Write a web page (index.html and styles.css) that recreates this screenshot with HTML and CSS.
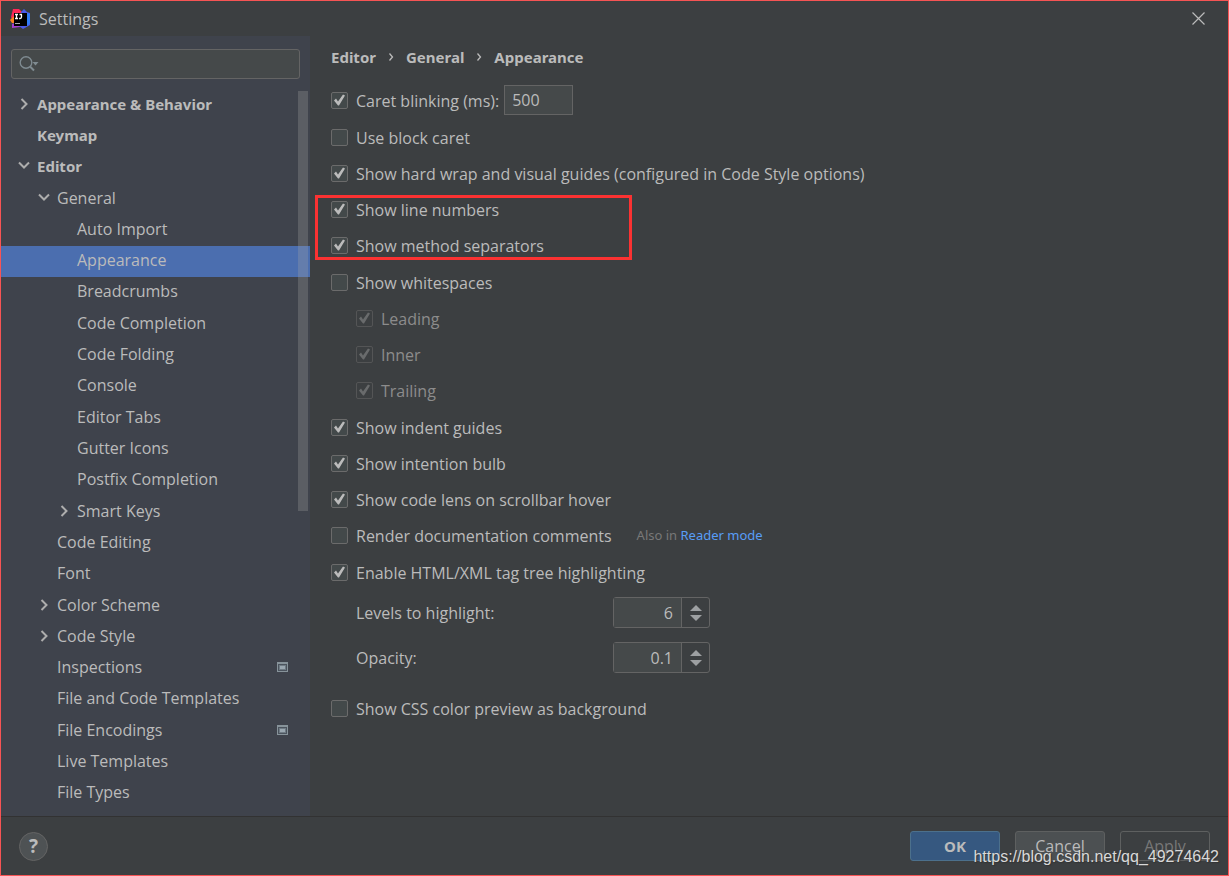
FILE: index.html
```html
<!DOCTYPE html>
<html lang="en">
<head>
<meta charset="utf-8">
<title>Settings</title>
<link rel="stylesheet" href="styles.css">
</head>
<body>
<div class="window">
  <header class="titlebar">
    <svg class="logo" width="20" height="20" viewBox="0 0 20 20" aria-hidden="true">
      <path d="M3 0 9 0l3 3-2 9H3L1 8z" fill="#fe2857"/>
      <path d="M0 11 4 7l1 7-3 0z" fill="#fc801d"/>
      <path d="M2 15l6-2 4 3-2 2-8 1z" fill="#a63fd0"/>
      <path d="M11 3l3-3 3 3 3 1v12l-7 4-4-3z" fill="#4a5bea"/>
      <path d="M17 4l3 1v9l-3 3z" fill="#2f7df6"/>
      <path fill="#000" d="M4 4h13v13H4z"/>
      <path d="M5 5.500h3M6.500 5.500v4M5 9.500h3M9.500 5.500h2.500M11.500 5.500v2.600q0 1.400-1.400 1.400h-1" fill="none" stroke="#fff" stroke-width="1.300"/>
      <path d="M5 14.500h5" stroke="#aaa" stroke-width="1"/>
    </svg>
    <h1 class="title">Settings</h1>
    <button class="close" type="button" aria-label="Close">
      <svg width="13" height="13" viewBox="0 0 13 13"><path d="M.5.5l12 12M12.500.5l-12 12" stroke="#bbb" stroke-width="1.200"/></svg>
    </button>
  </header>

  <div class="main">
    <nav class="sidebar" aria-label="Settings categories">
      <div class="search">
        <svg width="22" height="18" viewBox="0 0 22 18" aria-hidden="true"><circle cx="7" cy="7.500" r="5.800" fill="none" stroke="#7f8b91" stroke-width="1.400"/><path d="M11 11.500l4 4" stroke="#7f8b91" stroke-width="2"/><path d="M13.500 7h6l-3 3.500z" fill="#7f8b91"/></svg>
        <input class="search-input" type="text" aria-label="Search settings">
      </div>
      <div class="tree-area">
      <ul class="tree">
        <li class="node top"><svg class="arrow" viewBox="0 0 12 12"><path d="M3.500 1l5 5-5 5"/></svg><a href="#">Appearance &amp; Behavior</a></li>
        <li class="node top"><span class="arrow"></span><a href="#">Keymap</a></li>
        <li class="node top"><svg class="arrow" viewBox="0 0 12 12"><path d="M1 2.500l5 5 5-5"/></svg><a href="#">Editor</a></li>
        <li class="node second"><svg class="arrow" viewBox="0 0 12 12"><path d="M1 2.500l5 5 5-5"/></svg><a href="#">General</a></li>
        <li class="node third"><span class="arrow"></span><a href="#">Auto Import</a></li>
        <li class="node third selected"><span class="arrow"></span><a href="#" aria-current="page">Appearance</a></li>
        <li class="node third"><span class="arrow"></span><a href="#">Breadcrumbs</a></li>
        <li class="node third"><span class="arrow"></span><a href="#">Code Completion</a></li>
        <li class="node third"><span class="arrow"></span><a href="#">Code Folding</a></li>
        <li class="node third"><span class="arrow"></span><a href="#">Console</a></li>
        <li class="node third"><span class="arrow"></span><a href="#">Editor Tabs</a></li>
        <li class="node third"><span class="arrow"></span><a href="#">Gutter Icons</a></li>
        <li class="node third"><span class="arrow"></span><a href="#">Postfix Completion</a></li>
        <li class="node third"><svg class="arrow" viewBox="0 0 12 12"><path d="M3.500 1l5 5-5 5"/></svg><a href="#">Smart Keys</a></li>
        <li class="node second"><span class="arrow"></span><a href="#">Code Editing</a></li>
        <li class="node second"><span class="arrow"></span><a href="#">Font</a></li>
        <li class="node second"><svg class="arrow" viewBox="0 0 12 12"><path d="M3.500 1l5 5-5 5"/></svg><a href="#">Color Scheme</a></li>
        <li class="node second"><svg class="arrow" viewBox="0 0 12 12"><path d="M3.500 1l5 5-5 5"/></svg><a href="#">Code Style</a></li>
        <li class="node second"><span class="arrow"></span><a href="#">Inspections</a><svg class="project" width="11" height="10" viewBox="0 0 11 10"><path fill="#87939a" d="M0 0h11v10H0z"/><path fill="#4b535d" d="M1 2h9v7H1z"/><path fill="#6f7b84" d="M2 3h7v5H2z"/><path fill="#9aa7b0" d="M3 4h5v3H3z"/></svg></li>
        <li class="node second"><span class="arrow"></span><a href="#">File and Code Templates</a></li>
        <li class="node second"><span class="arrow"></span><a href="#">File Encodings</a><svg class="project" width="11" height="10" viewBox="0 0 11 10"><path fill="#87939a" d="M0 0h11v10H0z"/><path fill="#4b535d" d="M1 2h9v7H1z"/><path fill="#6f7b84" d="M2 3h7v5H2z"/><path fill="#9aa7b0" d="M3 4h5v3H3z"/></svg></li>
        <li class="node second"><span class="arrow"></span><a href="#">Live Templates</a></li>
        <li class="node second"><span class="arrow"></span><a href="#">File Types</a></li>
      </ul>
      <div class="scroll-thumb"></div>
      </div>
    </nav>

    <main class="content">
      <h2 class="crumbs">
        <span>Editor</span>
        <svg width="6" height="8" viewBox="0 0 6 8"><path d="M1.500 .5L4.500 4 1.500 7.500"/></svg>
        <span>General</span>
        <svg width="6" height="8" viewBox="0 0 6 8"><path d="M1.500 .5L4.500 4 1.500 7.500"/></svg>
        <span>Appearance</span>
      </h2>
      <form class="options">
        <div class="row caret-row"><input class="check" type="checkbox" id="blink" checked><label for="blink">Caret blinking (ms):</label><input class="field" type="text" value="500" aria-label="Caret blinking period"></div>
        <div class="group">
          <div class="row"><input class="check" type="checkbox" id="block"><label for="block">Use block caret</label></div>
          <div class="row"><input class="check" type="checkbox" id="wrap" checked><label for="wrap">Show hard wrap and visual guides (configured in Code Style options)</label></div>
          <div class="marked">
            <div class="row"><input class="check" type="checkbox" id="lines" checked><label for="lines">Show line numbers</label></div>
            <div class="row"><input class="check" type="checkbox" id="methods" checked><label for="methods">Show method separators</label></div>
          </div>
        </div>
        <div class="group">
          <div class="row"><input class="check" type="checkbox" id="spaces"><label for="spaces">Show whitespaces</label></div>
          <div class="row sub"><input class="check" type="checkbox" id="leading" checked disabled><label for="leading">Leading</label></div>
          <div class="row sub"><input class="check" type="checkbox" id="inner" checked disabled><label for="inner">Inner</label></div>
          <div class="row sub"><input class="check" type="checkbox" id="trailing" checked disabled><label for="trailing">Trailing</label></div>
        </div>
        <div class="group">
          <div class="row"><input class="check" type="checkbox" id="indent" checked><label for="indent">Show indent guides</label></div>
          <div class="row"><input class="check" type="checkbox" id="bulb" checked><label for="bulb">Show intention bulb</label></div>
          <div class="row"><input class="check" type="checkbox" id="lens" checked><label for="lens">Show code lens on scrollbar hover</label></div>
          <div class="row"><input class="check" type="checkbox" id="docs"><label for="docs">Render documentation comments</label><span class="hint">Also in <a href="#">Reader mode</a></span></div>
        </div>
        <div class="group">
          <div class="row"><input class="check" type="checkbox" id="tags" checked><label for="tags">Enable HTML/XML tag tree highlighting</label></div>
        </div>
        <div class="levels">
          <label for="levels">Levels to highlight:</label>
          <div class="spinner"><input type="number" id="levels" value="6"><div class="steps"><button type="button" aria-label="More levels"><svg width="12" height="6" viewBox="0 0 12 6"><path d="M6 0l6 6H0z"/></svg></button><button type="button" aria-label="Fewer levels"><svg width="12" height="6" viewBox="0 0 12 6"><path d="M6 6l6-6H0z"/></svg></button></div></div>
          <label for="opacity">Opacity:</label>
          <div class="spinner"><input type="number" id="opacity" value="0.1" step="0.1"><div class="steps"><button type="button" aria-label="More opacity"><svg width="12" height="6" viewBox="0 0 12 6"><path d="M6 0l6 6H0z"/></svg></button><button type="button" aria-label="Less opacity"><svg width="12" height="6" viewBox="0 0 12 6"><path d="M6 6l6-6H0z"/></svg></button></div></div>
        </div>
        <div class="row"><input class="check" type="checkbox" id="css"><label for="css">Show CSS color preview as background</label></div>
      </form>
    </main>
  </div>

  <footer class="footer">
    <button class="help" type="button" aria-label="Help">?</button>
    <button class="button primary" type="button">OK</button>
    <button class="button" type="button">Cancel</button>
    <button class="button" type="button" disabled>Apply</button>
    <span class="watermark">https://blog.csdn.net/qq_49274642</span>
  </footer>
</div>
</body>
</html>
```

FILE: styles.css
```css
*, *::before, *::after { box-sizing: border-box; }

body {
  margin: 0;
  background: #3c3f41;
  color: #bbbbbb;
  font: 16px/22px "Open Sans", "Noto Sans", sans-serif;
}

input, button { font: inherit; color: inherit; }

.window {
  display: flex;
  flex-direction: column;
  min-height: 100vh;
  border: 1px solid #f75454;
}

.titlebar {
  display: flex;
  align-items: center;
  height: 35px;
  padding: 0 23px 0 9px;
}

.title { margin: 0 auto 0 9px; font-size: 16px; font-weight: 400; }

.close { display: flex; padding: 0; border: 0; background: none; }

.main { display: flex; flex: 1; }

.sidebar {
  display: flex;
  flex-direction: column;
  flex: none;
  width: 309px;
  padding: 13px 0 7px;
  background: #3f434c;
}

.search {
  display: flex;
  align-items: center;
  height: 30px;
  margin: 0 10px;
  padding-left: 7px;
  border: 1px solid #646464;
  border-radius: 3px;
  background: #45494a;
}

.search-input { flex: 1; min-width: 0; border: 0; background: none; outline: 0; }

.tree-area { position: relative; display: flex; flex: 1; margin-top: 10px; }

.tree {
  display: grid;
  grid-auto-rows: 1fr;
  flex: 1;
  margin: 0;
  padding: 0;
  list-style: none;
}

.node { display: flex; align-items: center; padding: 0 22px 2px 0; }
.node a { margin-left: 7px; color: inherit; text-decoration: none; }
.top { padding-left: 17px; font: 700 15px/22px "Noto Sans", sans-serif; }
.second { padding-left: 37px; }
.third { padding-left: 57px; }
.selected { background: #4b6eaf; }

.arrow { flex: none; width: 12px; height: 12px; fill: none; stroke: #adadad; stroke-width: 2; }
.project { margin-left: auto; }

.scroll-thumb {
  position: absolute;
  top: 2px;
  right: 2px;
  width: 10px;
  height: 420px;
  background: rgba(166, 166, 166, 0.28);
}

.content { flex: 1; min-width: 0; padding: 10px 20px 0 21px; }

.crumbs {
  display: flex;
  align-items: center;
  gap: 12px;
  margin: 0;
  font: 700 15px/22px "Noto Sans", sans-serif;
}
.crumbs svg { fill: none; stroke: #bbbbbb; stroke-width: 1.3; }

.options { margin-top: 14px; }
.row { display: flex; align-items: center; height: 36px; }
.row label { padding-top: 1px; }
.caret-row { margin-bottom: 1px; }
.group { margin-bottom: 1px; }
.sub { padding-left: 25px; }

.check {
  appearance: none;
  flex: none;
  width: 17px;
  height: 17px;
  margin: 0 8px 0 0;
  border: 1px solid #6b6b6b;
  border-radius: 2px;
  background: #43494a;
}
.check:checked::before {
  content: "";
  display: block;
  width: 15px;
  height: 15px;
  background: #bbbbbb;
  clip-path: polygon(2px 8px, 4px 6px, 6px 9px, 11px 2px, 13px 3px, 7px 13px, 6px 13px);
}
.check:disabled { border-color: #545556; background: none; }
.check:disabled::before { background: #696b6c; }
.check:disabled + label { color: #8c8c8c; }

.field {
  width: 69px;
  height: 30px;
  margin-left: 5px;
  padding: 0 7px;
  border: 1px solid #646464;
  background: #45494a;
}

.marked { position: relative; }
.marked::after {
  content: "";
  position: absolute;
  top: 4px;
  bottom: 3px;
  left: -16px;
  width: 317px;
  border: 3px solid #fb3232;
  pointer-events: none;
}

.hint { margin-left: 25px; color: #787878; font: 13px/22px "Noto Sans", sans-serif; }
.hint a { color: #589df6; text-decoration: none; }

.levels {
  display: grid;
  grid-template-columns: 257px auto;
  justify-content: start;
  align-items: center;
  gap: 14px 0;
  margin: 7px 0 17px;
  padding-left: 25px;
}

.spinner {
  display: flex;
  width: 97px;
  height: 31px;
  border: 1px solid #646464;
  border-radius: 3px;
}
.spinner input {
  appearance: textfield;
  flex: 1;
  min-width: 0;
  margin: 0;
  padding: 0 8px;
  border: 0;
  border-right: 1px solid #646464;
  background: #45494a;
  text-align: right;
}
.spinner input::-webkit-inner-spin-button { appearance: none; margin: 0; }
.steps {
  display: flex;
  flex-direction: column;
  align-items: center;
  justify-content: center;
  gap: 4px;
  width: 27px;
}
.steps button { display: flex; padding: 0; border: 0; background: none; fill: #9da0a2; }

.footer {
  position: relative;
  display: flex;
  align-items: center;
  gap: 15px;
  height: 59px;
  padding: 0 18px;
  border-top: 1px solid #323232;
}

.help {
  width: 29px;
  height: 29px;
  margin-right: auto;
  padding: 0;
  border: 1px solid #646464;
  border-radius: 50%;
  background: #4e5254;
  font-size: 19px;
  font-weight: 700;
  line-height: 26px;
}

.button {
  width: 90px;
  height: 30px;
  padding: 0;
  border: 1px solid #5e6060;
  border-radius: 3px;
  background: #4c5052;
}
.primary { border-color: #4c708c; background: #365880; font: 700 15px/22px "Noto Sans", sans-serif; }
.button:disabled { background: none; color: #777777; }

.watermark {
  position: absolute;
  right: 9px;
  bottom: 7px;
  color: #d8d8d8;
  font: 16px/22px "Liberation Sans", Arial, sans-serif;
  text-shadow: 1px 1px 1px #333333;
}
```
